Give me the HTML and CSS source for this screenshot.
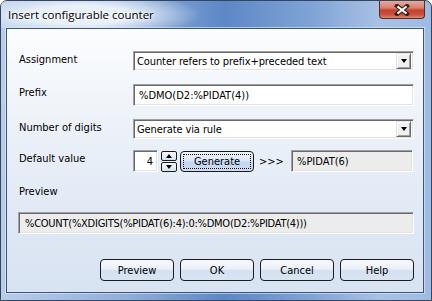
FILE: index.html
```html
<!DOCTYPE html>
<html lang="en">

<head>
    <meta charset="UTF-8">
    <title>Insert configurable counter</title>
    <link rel="stylesheet" href="styles.css">
</head>

<body>
    <div class="window">
        <div class="titlebar">
            <span class="title">Insert configurable counter</span>
            <button type="button" class="close">
                <svg width="16" height="12" viewBox="0 0 16 12">
                    <path d="M3 2 L13 10 M13 2 L3 10" stroke="#3b2320" stroke-width="4.2" stroke-linecap="square" fill="none"/>
                    <path d="M3.5 2.5 L12.5 9.5 M12.5 2.5 L3.5 9.5" stroke="#fff" stroke-width="2.2" fill="none"/>
                </svg>
            </button>
        </div>

        <div class="client">
            <div class="row">
                <span class="label">Assignment</span>
                <div class="combo">
                    <span class="combo-text">Counter refers to prefix+preceded text</span>
                    <span class="drop"><span class="arrow"></span></span>
                </div>
            </div>

            <div class="row gap13">
                <span class="label">Prefix</span>
                <div class="edit">%DMO(D2:%PIDAT(4))</div>
            </div>

            <div class="row gap13">
                <span class="label">Number of digits</span>
                <div class="combo">
                    <span class="combo-text">Generate via rule</span>
                    <span class="drop"><span class="arrow"></span></span>
                </div>
            </div>

            <div class="row gap11">
                <span class="label">Default value</span>
                <div class="edit number">4</div>
                <div class="spin">
                    <span class="spin-btn"><span class="arrow up"></span></span>
                    <span class="spin-btn"><span class="arrow"></span></span>
                </div>
                <button type="button" class="btn generate">Generate</button>
                <span class="arrows">&gt;&gt;&gt;</span>
                <div class="edit readonly result">%PIDAT(6)</div>
            </div>

            <div class="preview-label">Preview</div>
            <div class="edit readonly preview">%COUNT(%XDIGITS(%PIDAT(6):4):0:%DMO(D2:%PIDAT(4)))</div>

            <div class="buttons">
                <button type="button" class="btn">Preview</button>
                <button type="button" class="btn">OK</button>
                <button type="button" class="btn">Cancel</button>
                <button type="button" class="btn">Help</button>
            </div>
        </div>
    </div>
</body>

</html>
```

FILE: styles.css
```css
body {
    margin: 0;
    font-family: "DejaVu Sans", "Liberation Sans", sans-serif;
    font-stretch: condensed;
    font-size: 11px;
    color: #000;
}

.window {
    width: 432px;
    height: 301px;
    box-sizing: border-box;
    border: 1px solid #34465f;
    border-radius: 7px 7px 0 0;
    display: flex;
    flex-direction: column;
    background: linear-gradient(90deg, #b9cde9 0%, #8fadd9 30%, #5d88c6 52%, #7fa3d6 72%, #a8c1e4 88%, #9fbbe2 100%);
}

.titlebar {
    height: 27px;
    display: flex;
    justify-content: space-between;
    align-items: flex-start;
    padding-left: 7px;
    background: radial-gradient(ellipse 120px 24px at 80px 14px, rgba(236, 243, 251, 0.95) 40%, rgba(236, 243, 251, 0) 100%);
}

.title {
    font-family: "Open Sans", "Noto Sans", sans-serif;
    font-stretch: normal;
    font-size: 11.5px;
    padding-top: 6px;
    color: #000;
    text-shadow: 0 0 6px #fff, 0 0 3px #fff;
}

.close {
    width: 46px;
    height: 18px;
    margin-right: 6px;
    padding: 0;
    border: 1px solid #5b2a24;
    border-top: none;
    border-radius: 0 0 4px 4px;
    background: linear-gradient(#e7ab9e 0%, #d7806f 40%, #c5402f 55%, #c8503c 80%, #dc8b70 100%);
    display: flex;
    align-items: center;
    justify-content: center;
}

.client {
    flex: 1;
    margin: 0 7px 7px 5px;
    border: 1px solid #3e557a;
    box-shadow: 0 0 0 1px rgba(225, 236, 250, 0.6);
    background: linear-gradient(180deg, #fcfdfe 0%, #edf2f9 35%, #e0e9f5 70%, #d8e3f2 100%);
    padding: 22px 9px 0 12px;
    display: flex;
    flex-direction: column;
}

.row {
    display: flex;
    align-items: flex-start;
}

.gap13 {
    margin-top: 13px;
}

.gap11 {
    margin-top: 11px;
}

.label {
    width: 114px;
    flex: none;
    padding-top: 2px;
    line-height: 13px;
}

.combo {
    flex: 1;
    height: 20px;
    box-sizing: border-box;
    background: #fff;
    border-top: 1px solid #a0a0a0;
    border-left: 1px solid #a0a0a0;
    border-bottom: 1px solid #fff;
    border-right: 1px solid #fff;
    box-shadow: inset 1px 1px 0 #696969, inset -1px -1px 0 #e3e3e3;
    display: flex;
    align-items: center;
    padding: 0 2px 0 3px;
    letter-spacing: -0.1px;
}

.combo-text {
    flex: 1;
}

.drop {
    width: 15px;
    height: 16px;
    box-sizing: border-box;
    background: #f0f0f0;
    border-top: 1px solid #e3e3e3;
    border-left: 1px solid #e3e3e3;
    border-right: 1px solid #696969;
    border-bottom: 1px solid #696969;
    box-shadow: inset 1px 1px 0 #fff, inset -1px -1px 0 #a0a0a0;
    display: flex;
    align-items: center;
    justify-content: center;
}

.arrow {
    width: 0;
    height: 0;
    border-left: 3.5px solid transparent;
    border-right: 3.5px solid transparent;
    border-top: 4px solid #000;
}

.arrow.up {
    border-top: none;
    border-bottom: 4px solid #000;
}

.edit {
    flex: 1;
    height: 22px;
    box-sizing: border-box;
    background: #fff;
    border-top: 1px solid #a0a0a0;
    border-left: 1px solid #a0a0a0;
    border-bottom: 1px solid #fff;
    border-right: 1px solid #fff;
    box-shadow: inset 1px 1px 0 #696969, inset -1px -1px 0 #e3e3e3;
    padding: 0 5px;
    display: flex;
    align-items: center;
    white-space: nowrap;
}

.readonly {
    background: #ececec;
}

.number {
    flex: none;
    width: 25px;
    justify-content: flex-end;
    padding: 0 4px;
}

.spin {
    margin: 1px 0 0 3px;
    display: flex;
    flex-direction: column;
    gap: 1px;
}

.spin-btn {
    width: 16px;
    height: 10px;
    box-sizing: border-box;
    border: 1px solid #1b1b1b;
    border-radius: 2px;
    background: linear-gradient(#f6f9fd, #d6e2f2);
    display: flex;
    align-items: center;
    justify-content: center;
}

.btn {
    width: 74px;
    height: 22px;
    padding: 0;
    border: 1px solid #1c1c1c;
    border-radius: 4px;
    background: linear-gradient(#f7f9fd 0%, #eaf0f8 45%, #d5e1f1 52%, #d9e4f3 100%);
    font: inherit;
    color: #000;
}

.generate {
    height: 21px;
    margin: 1px 0 0 3px;
    background: linear-gradient(#eef4fb 0%, #dbe7f6 45%, #c3d7f0 52%, #c9dbf1 100%);
    outline: 1px dotted #000;
    outline-offset: -4px;
}

.arrows {
    width: 37px;
    padding: 5px 0 0 5px;
    box-sizing: border-box;
    line-height: 13px;
}

.result {
    flex: none;
    width: 122px;
}

.preview-label {
    margin-top: 13px;
    line-height: 13px;
}

.preview {
    flex: none;
    margin: 14px 0 0 -1px;
    padding-left: 6px;
    letter-spacing: -0.25px;
}

.buttons {
    margin-top: 25px;
    display: flex;
    justify-content: flex-end;
    gap: 6px;
}
```
